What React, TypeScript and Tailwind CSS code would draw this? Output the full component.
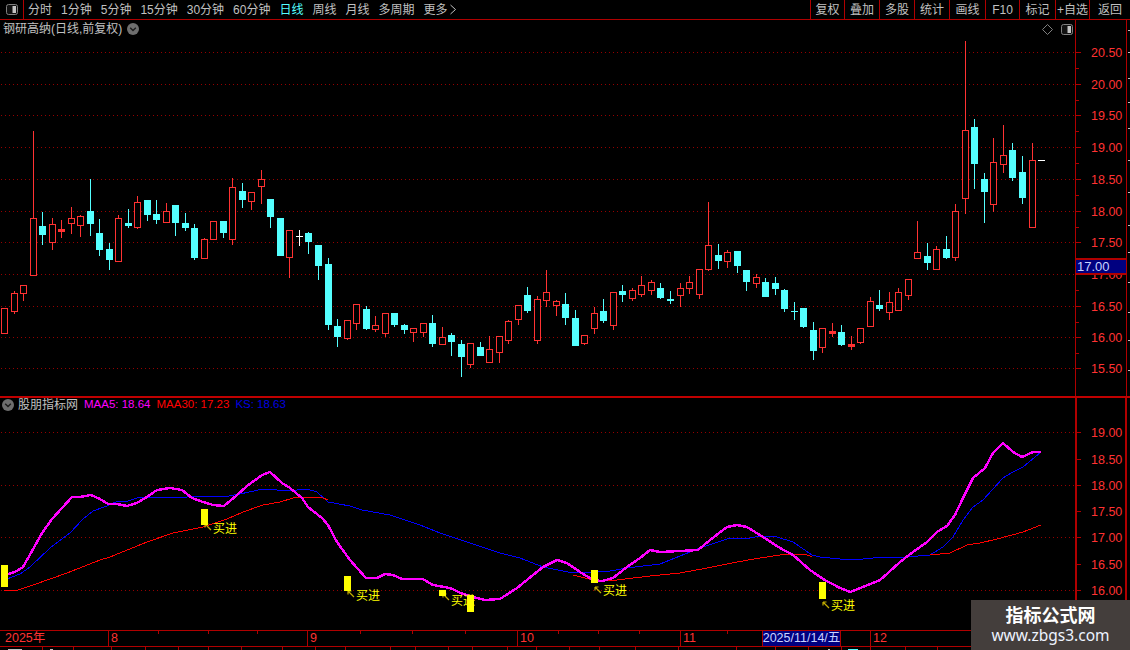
import React from "react";

// x, high, bodyTop, bodyBottom, low, colour (r red, c cyan, w white; d = doji)
const candles: (number | string)[][] = [
  [4,308,308,333,333,"r"],[14,291,293,311,314,"r"],[23,285,285,293,301,"r"],
  [33,131,218,275,275,"r"],[42.5,212,226,235,245,"c"],[52,218,224,242,250,"r"],[61,220,229,231,238,"rd"],
  [71,207,218,223,234,"r"],[80.5,215,216,225,237,"r"],[90,179,211,224,236,"c"],[99.5,219,233,250,256,"c"],
  [109,243,249,260,270,"c"],[118.5,215,218,261,261,"r"],[128,209,223,226,228,"c"],[137,196,202,227,229,"r"],
  [147,200,200,215,221,"c"],[156.5,200,214,220,224,"c"],[166,203,211,222,223,"r"],[175.5,205,205,223,236,"c"],
  [185,213,223,228,231,"c"],[194.5,224,228,258,260,"c"],[204.5,238,239,258,259,"r"],[213.5,221,221,239,239,"r"],
  [223,221,221,233,238,"c"],[232.5,178,187,239,245,"r"],[242.5,183,191,200,208,"c"],[251.5,192,192,201,210,"r"],
  [261,170,179,186,204,"r"],[270.5,199,199,217,228,"c"],[280,218,218,256,256,"c"],[289.5,230,230,257,278,"r"],
  [299,230,236,236,246,"w"],[308.5,232,233,242,254,"c"],[318.5,245,245,266,280,"c"],[328,258,264,325,330,"c"],
  [337.5,319,326,337,347,"c"],[347.5,320,320,338,340,"r"],[356.5,304,304,323,330,"r"],[366,306,309,329,330,"c"],
  [375.5,316,325,329,332,"r"],[385,313,313,333,337,"r"],[394.5,313,313,325,327,"c"],[404,324,325,330,334,"c"],
  [413.5,328,328,332,342,"r"],[423,323,323,332,337,"r"],[432.5,315,323,344,347,"c"],[442.5,327,337,344,345,"r"],
  [451.5,333,335,342,356,"c"],[461.5,340,344,357,377,"c"],[470.5,343,343,364,368,"r"],[480.5,342,347,356,356,"c"],
  [489.5,336,349,362,362,"r"],[499,336,336,352,363,"r"],[508.5,320,321,340,344,"r"],[518.5,305,305,319,325,"r"],
  [527.5,287,295,311,313,"c"],[537,296,299,340,344,"r"],[546.5,270,292,300,307,"r"],[556.5,300,301,305,316,"r"],
  [565.5,293,304,318,325,"c"],[575.5,310,318,346,346,"c"],[584.5,335,335,343,345,"r"],[594.5,307,313,328,334,"r"],
  [603.5,299,311,321,323,"c"],[613.5,292,292,325,330,"r"],[622.5,285,291,295,302,"c"],[632.5,288,290,298,301,"r"],
  [641.5,276,285,294,297,"r"],[651.5,280,282,290,295,"r"],[660.5,283,288,298,299,"c"],[670.5,291,299,301,304,"c"],
  [680.5,283,288,295,307,"r"],[689.5,276,282,288,294,"r"],[699.5,269,269,294,299,"r"],[708.5,202,245,269,271,"r"],
  [718.5,244,255,261,269,"c"],[727.5,250,252,261,268,"r"],[737.5,251,251,266,273,"c"],[746.5,270,270,282,291,"c"],
  [756.5,274,277,283,288,"r"],[765.5,278,282,297,297,"c"],[775,277,283,289,295,"c"],[784.5,289,290,309,312,"c"],
  [794,302,311,311,320,"cd"],[803.5,308,308,327,328,"c"],[813,322,330,351,360,"c"],[822.5,328,328,347,353,"r"],
  [832,323,331,333,337,"rd"],[841.5,325,332,345,346,"c"],[851,336,344,346,350,"rd"],[860.5,328,328,342,344,"r"],
  [870.5,297,301,326,326,"r"],[879.5,290,305,309,311,"c"],[889,292,302,312,320,"r"],[898.5,288,292,310,311,"r"],
  [908.5,279,279,295,300,"r"],[917.5,221,252,258,258,"r"],[927.5,243,256,263,270,"c"],[936.5,246,249,269,269,"r"],
  [946.5,236,249,258,259,"c"],[955.5,204,211,257,261,"r"],[965.5,41,130,198,214,"r"],[974.5,119,127,164,189,"c"],
  [984.5,173,179,192,223,"c"],[993.5,138,162,204,212,"r"],[1003.5,125,155,164,173,"r"],[1012.5,143,150,178,181,"c"],
  [1022.5,156,172,198,204,"c"],[1032,143,160,227,227,"r"],
];

const RED = "#ff3232";
const CYAN = "#54ffff";

const magenta = "4,578 8,574 15,572 23,567 32,551 42,533 52,519 62,508 72,497 80,497 91,495 100,499 108,504 117,504 127,506 137,503 147,497 157,490 170,488 182,490 192,498 203,502 213,505 224,506 237,495 247,486 262,475 270,472 282,483 290,488 302,498 308,507 322,518 328,525 337,542 350,560 366,578 377,578 385,574 393,575 402,579 423,579 433,585 450,588 463,594 477,598 485,600 500,599 517,588 533,575 543,567 557,560 567,563 580,572 593,580 602,581 613,578 627,567 640,558 650,550 660,552 680,551 698,550 710,540 727,527 737,525 747,527 763,537 780,548 793,555 810,570 823,579 840,588 850,592 863,587 880,580 888,573 900,562 913,552 927,542 937,532 947,526 955,515 963,498 973,478 985,468 993,453 1003,443 1013,452 1022,457 1033,452 1041,452";
const blue = "7,579 20,574 30,567 50,548 70,533 83,519 93,511 107,506 118,501 128,501 137,498 160,497 187,497 203,496 223,497 240,494 263,489 277,490 287,491 307,489 317,492 328,502 350,506 362,510 390,515 420,525 440,533 470,543 500,553 520,558 543,567 573,573 593,572 610,571 627,568 660,564 680,556 700,548 727,539 750,538 760,536 777,537 793,542 812,555 820,557 840,559 863,559 883,557 907,557 930,555 943,547 953,537 963,520 973,507 983,500 1003,478 1013,472 1023,467 1041,452";
const reds = [
  "4,591 18,590 33,585 67,573 100,560 110,557 147,542 173,533 203,527 227,519 243,512 263,505 280,502 293,498 310,497 323,498 328,500",
  "573,575 597,581 617,580 650,576 680,573 707,568 737,562 760,558 787,554 805,554 812,557",
  "930,555 950,553 967,545 980,543 997,539 1023,532 1041,525",
];

const bars = [[1,565,22],[201,509,16],[344,576,15],[439,590,6],[467,595,17],[591,570,13],[819,582,17]];
const buys = [[205,524,213,532],[348,591,356,599],[443,594,451,604],[595,587,603,594],[823,602,831,609]];

const gridTop = [52,84,115,147,179,211,242,274,306,337,368];
const labelsTop = ["20.50","20.00","19.50","19.00","18.50","18.00","17.50","17.00","16.50","16.00","15.50"];
const gridSub = [432,485,537,590];
const labelsSub: [number, string][] = [[432,"19.00"],[459,"18.50"],[485,"18.00"],[511,"17.50"],[537,"17.00"],[564,"16.50"],[590,"16.00"]];

function Candle({ d }: { d: (number | string)[] }) {
  const [x0, hi, top, bot, lo, k] = d as [number, number, number, number, number, string];
  const x = Math.floor(x0) + 0.5;
  const kind = k[0];
  const color = kind === "r" ? RED : kind === "c" ? CYAN : "#ffffff";
  const doji = k.length > 1 || kind === "w";
  return (
    <g shapeRendering="crispEdges" stroke={color}>
      {hi < top && <line x1={x} x2={x} y1={hi} y2={top} />}
      {lo > bot && <line x1={x} x2={x} y1={bot} y2={lo} />}
      {doji ? (
        <rect x={x - 3.5} y={top} width={7} height={Math.max(1, bot - top + 1)} fill={color} stroke="none" />
      ) : kind === "r" ? (
        <rect x={x - 3} y={top + 0.5} width={6} height={bot - top} fill="#000" />
      ) : (
        <rect x={x - 3.5} y={top} width={7} height={bot - top} fill={color} stroke="none" />
      )}
    </g>
  );
}

const Dotted = ({ ys }: { ys: number[] }) => (
  <g stroke="#960000" strokeDasharray="1 3" shapeRendering="crispEdges">
    {ys.map((y) => (
      <line key={y} x1={1} x2={1075} y1={y + 0.5} y2={y + 0.5} />
    ))}
  </g>
);

const CircleIcon = () => (
  <svg width="12" height="12" viewBox="0 0 12 12" className="shrink-0">
    <circle cx="6" cy="6" r="6" fill="#6e6e6e" />
    <path d="M3.2 4.8 L6 7.6 L8.8 4.8" fill="none" stroke="#1c1c1c" strokeWidth="1.4" />
  </svg>
);

const PanelIcon = () => (
  <svg width="12" height="11" viewBox="0 0 12 11" className="shrink-0">
    <rect x="0.5" y="0.5" width="11" height="10" rx="2" fill="#111" stroke="#808080" />
    <rect x="6.5" y="2" width="3.5" height="7" fill="#c4c4c4" />
  </svg>
);

const leftTabs = ["分时","1分钟","5分钟","15分钟","30分钟","60分钟","日线","周线","月线","多周期"];
const rightTabs: [string, string][] = [
  ["复权","w-[34px]"],["叠加","w-[35px]"],["多股","w-[35px]"],["统计","w-[35px]"],["画线","w-[36px]"],
  ["F10","w-[34px]"],["标记","w-[36px]"],["+自选","w-[34px]"],["返回","w-[41px]"],
];

const timeCells: [string, string][] = [
  ["2025年","w-[108px]"],["8","w-[199px]"],["9","w-[210px]"],["10","w-[163px]"],["11","w-[82px]"],
];

export default function App() {
  return (
    <div className="relative flex h-[650px] w-[1130px] flex-col overflow-hidden bg-black text-[12px] leading-none text-[#c0c0c0] [font-family:'Liberation_Sans','Noto_Sans_CJK_SC',sans-serif]">
      {/* toolbar */}
      <div className="flex h-[20px] shrink-0 items-center border-b border-[#b00000]">
        <div className="flex h-full w-[24px] items-center justify-center border-r border-[#b00000]">
          <PanelIcon />
        </div>
        <div className="flex flex-1 items-center gap-[9px] pl-[4px]">
          {leftTabs.map((t) => (
            <span key={t} className={t === "日线" ? "text-[#54ffff]" : ""}>{t}</span>
          ))}
          <span className="flex items-center gap-[1px]">
            更多
            <svg width="8" height="11" viewBox="0 0 8 11"><path d="M1.5 1 L6.5 5.5 L1.5 10" fill="none" stroke="#c0c0c0" /></svg>
          </span>
        </div>
        {rightTabs.map(([t, w]) => (
          <div key={t} className={`flex h-full items-center justify-center border-l border-[#b00000] ${w}`}>{t}</div>
        ))}
      </div>

      {/* price pane */}
      <div className="relative flex h-[376px] shrink-0">
        <svg width="1075" height="376" viewBox="0 20 1075 376" className="block shrink-0">
          <Dotted ys={gridTop} />
          {candles.map((d, i) => (
            <Candle key={i} d={d} />
          ))}
          <line x1={1038} x2={1045} y1={160.5} y2={160.5} stroke="#ffffff" shapeRendering="crispEdges" />
        </svg>
        <div className="relative h-full w-[52px] shrink-0 border-x border-[#b00000]">
          <svg width="50" height="376" viewBox="1076 20 50 376" className="block">
            <g stroke="#b00000" shapeRendering="crispEdges">
              {gridTop.map((y, i) => (
                <g key={y}>
                  <line x1={1076} x2={1081} y1={y + 0.5} y2={y + 0.5} />
                  {i < gridTop.length - 1 && <line x1={1076} x2={1079} y1={y + 16.5} y2={y + 16.5} />}
                </g>
              ))}
            </g>
            <g fill={RED} fontSize="12.5">
              {gridTop.map((y, i) => (
                <text key={y} x={1091} y={y + 5}>{labelsTop[i]}</text>
              ))}
            </g>
          </svg>
          <div className="absolute left-[-1px] top-[238px] flex h-[17px] w-[52px] items-center border-y-2 border-x border-[#b00000] bg-[#000080] pl-[1px] text-[13px] text-[#c8d2ff]">
            17.00
          </div>
        </div>
        <svg width="3" height="376" viewBox="0 0 3 376" className="block shrink-0">
          <g fill="#c0c0c0" shapeRendering="crispEdges">
            {[10,32,58,82,108,140,172,205,232,262,292,320,350].map((y) => (
              <rect key={y} x={1} y={y} width={2} height={1} />
            ))}
          </g>
        </svg>
        <div className="absolute left-[3px] top-[3px] flex items-center gap-[5px]">
          <span>钢研高纳(日线,前复权)</span>
          <CircleIcon />
        </div>
        <div className="absolute left-[1042px] top-[4px] flex items-center gap-[8px]">
          <svg width="11" height="11" viewBox="0 0 11 11"><path d="M5.5 0.5 L10.5 5.5 L5.5 10.5 L0.5 5.5 Z" fill="none" stroke="#808080" /></svg>
          <PanelIcon />
        </div>
      </div>

      <div className="h-[2px] w-full shrink-0 bg-[#c00000]" />

      {/* indicator pane */}
      <div className="relative flex h-[232px] shrink-0">
        <svg width="1075" height="232" viewBox="0 398 1075 232" className="block shrink-0">
          <Dotted ys={gridSub} />
          <g fill="none" shapeRendering="crispEdges">
            <polyline points={blue} stroke="#0000ff" strokeWidth="1" />
            {reds.map((p) => (
              <polyline key={p} points={p} stroke="#ff0000" strokeWidth="1" />
            ))}
            <polyline points={magenta} stroke="#ff00ff" strokeWidth="2.4" />
          </g>
          {buys.map(([x, y, tx, ty]) => (
            <g key={x}>
              <path d={`M${x} ${y} L${x + 6} ${y + 6} M${x} ${y} h3.5 M${x} ${y} v3.5`} stroke="#c4ae00" fill="none" strokeWidth="1.2" />
              <text x={tx} y={ty + 1} fill="#ffff00" fontSize="12">买进</text>
            </g>
          ))}
          <g fill="#ffff00" shapeRendering="crispEdges">
            {bars.map(([x, y, h]) => (
              <rect key={x} x={x} y={y} width={7} height={h} />
            ))}
          </g>
        </svg>
        <div className="h-full w-[52px] shrink-0 border-x-2 border-[#b00000]">
          <svg width="48" height="232" viewBox="1077 398 48 232" className="block">
            <g stroke="#b00000" shapeRendering="crispEdges">
              {labelsSub.map(([y]) => (
                <line key={y} x1={1077} x2={1081} y1={y + 0.5} y2={y + 0.5} />
              ))}
            </g>
            <g fill={RED} fontSize="12.5">
              {labelsSub.map(([y, t]) => (
                <text key={y} x={1091} y={y + 5}>{t}</text>
              ))}
            </g>
          </svg>
        </div>
        <div className="absolute left-[2px] top-0 flex h-[13px] items-center text-[11.5px]">
          <CircleIcon />
          <span className="ml-[4px] text-[12px]">股朋指标网</span>
          <span className="ml-[6px] text-[#ff00ff]">MAA5: 18.64</span>
          <span className="ml-[6px] text-[#ff0000]">MAA30: 17.23</span>
          <span className="ml-[6px] text-[#0000e0]">KS: 18.63</span>
        </div>
      </div>

      {/* time axis */}
      <div className="relative flex h-[17px] shrink-0 items-center border-y border-[#b00000] text-[12.5px] text-[#ff3232]">
        {timeCells.map(([t, w], i) => (
          <div key={t} className={`flex h-full items-center ${w} ${i === 0 ? "pl-[5px]" : "border-l border-[#b00000] pl-[2px]"}`}>{t}</div>
        ))}
        <div className="flex h-full w-[79px] items-center justify-center whitespace-nowrap border-x border-[#b00000] bg-[#000080] text-[#c8d2ff]">2025/11/14/五</div>
        <div className="h-full w-[29px]" />
        <div className="flex h-full w-[103px] items-center border-l border-[#b00000] pl-[2px]">12</div>
        <svg width="900" height="3" viewBox="0 0 900 3" className="absolute left-0 top-0">
          <g stroke="#b00000" shapeRendering="crispEdges">
            {[158,208,257,360,412,465,558,598,639,727].map((x) => (
              <line key={x} x1={x + 0.5} x2={x + 0.5} y1={0} y2={3} />
            ))}
          </g>
        </svg>
      </div>

      {/* clipped row under the axis */}
      <svg width="1130" height="4" viewBox="0 0 1130 4" className="block shrink-0">
        <g stroke="#b00000" shapeRendering="crispEdges">
          {[42,73,111,145,178,208,241,282,315,345,390,415,448,472,507,536,569,599,635,678,736,775,808,841,870,905,937].map((x) => (
            <line key={x} x1={x + 0.5} x2={x + 0.5} y1={0} y2={4} />
          ))}
        </g>
        <g shapeRendering="crispEdges">
          <rect x={8} y={2} width={14} height={2} fill="#c0c0c0" />
          <rect x={50} y={2} width={3} height={2} fill="#c0c0c0" />
          <rect x={828} y={2} width={2} height={2} fill="#c0c0c0" />
          <rect x={848} y={2} width={10} height={2} fill="#54ffff" />
        </g>
      </svg>

      {/* watermark */}
      <div className="absolute left-[971px] top-[600px] flex h-[50px] w-[159px] flex-col items-center bg-[#443e3c] pt-[5px] text-white">
        <span className="text-[18px] leading-[22px] font-bold">指标公式网</span>
        <span className="text-[15.5px] leading-[17px] text-[#eef4ff] [font-family:'Noto_Sans',sans-serif]">www.zbgs3.com</span>
      </div>
    </div>
  );
}
